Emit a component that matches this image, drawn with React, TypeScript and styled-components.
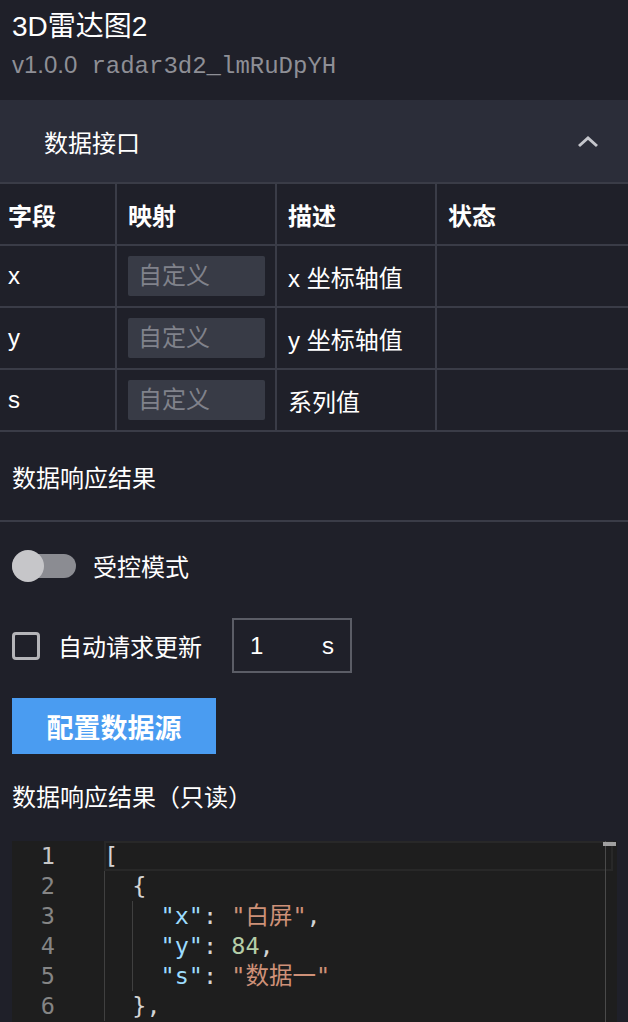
import styled, { createGlobalStyle } from "styled-components";

const GlobalStyle = createGlobalStyle`
  body {
    margin: 0;
    background: #1f2029;
    color: #fff;
    font-family: "Liberation Sans", "Noto Sans CJK SC", sans-serif;
  }
`;

const Page = styled.div`
  width: 628px;
`;

const Header = styled.div`
  height: 100px;
  box-sizing: border-box;
  padding: 11px 12px 0;
`;

const Title = styled.h1`
  margin: 0;
  font-size: 28px;
  line-height: 32px;
  font-weight: 400;
`;

const Version = styled.div`
  margin-top: 8px;
  font-size: 24px;
  line-height: 28px;
  color: #8e8f96;
`;

const Mono = styled.span`
  margin-left: 14px;
  font-family: "Liberation Mono", monospace;
`;

const Collapse = styled.div`
  height: 82px;
  display: flex;
  align-items: center;
  justify-content: space-between;
  padding: 0 28px 0 44px;
  background: #2b2d39;
  font-size: 24px;
`;

const Grid = styled.div`
  border-top: 2px solid #3a3c47;
`;

const Row = styled.div`
  display: grid;
  grid-template-columns: 117px 160px 160px 1fr;
`;

const Cell = styled.div<{ $head?: boolean }>`
  height: 62px;
  box-sizing: border-box;
  display: flex;
  align-items: center;
  padding: 0 10px 0 11px;
  border-right: 2px solid #3a3c47;
  border-bottom: 2px solid #3a3c47;
  font-size: 24px;
  font-weight: ${(p) => (p.$head ? 700 : 400)};
  &:first-child {
    padding-left: 8px;
  }
  &:last-child {
    border-right: none;
  }
`;

const MapInput = styled.input`
  width: 100%;
  height: 40px;
  box-sizing: border-box;
  border: none;
  border-radius: 2px;
  background: #383b46;
  padding: 0 10px;
  font-size: 24px;
  font-family: inherit;
  color: #fff;
  &::placeholder {
    color: #80828b;
  }
`;

const ResultRow = styled.div`
  height: 88px;
  display: flex;
  align-items: center;
  padding: 0 12px;
  font-size: 24px;
  border-bottom: 2px solid #3a3c47;
`;

const Controls = styled.div`
  padding: 27px 12px 0;
  display: flex;
  flex-direction: column;
  align-items: flex-start;
`;

const ToggleRow = styled.div`
  display: flex;
  align-items: center;
  gap: 17px;
  height: 33px;
  font-size: 24px;
`;

const Track = styled.div`
  position: relative;
  width: 64px;
  height: 24px;
  border-radius: 12px;
  background: #8b8c92;
`;

const Thumb = styled.div`
  position: absolute;
  left: 0;
  top: -4px;
  width: 32px;
  height: 32px;
  border-radius: 50%;
  background: #c6c6c9;
`;

const CheckRow = styled.div`
  margin-top: 36px;
  display: flex;
  align-items: center;
  font-size: 24px;
`;

const Checkbox = styled.span`
  width: 28px;
  height: 28px;
  box-sizing: border-box;
  border: 3px solid #b4b4b8;
  border-radius: 4px;
  margin-right: 18px;
`;

const NumberBox = styled.div`
  margin-left: 30px;
  width: 120px;
  height: 55px;
  box-sizing: border-box;
  border: 2px solid #5b5d66;
  display: flex;
  align-items: center;
  justify-content: space-between;
  padding: 0 16px;
`;

const Button = styled.button`
  margin-top: 25px;
  width: 204px;
  height: 56px;
  border: none;
  background: #4a9cf1;
  color: #fff;
  font-family: inherit;
  font-size: 27px;
  font-weight: 700;
  cursor: pointer;
`;

const Label = styled.div`
  margin-top: 29px;
  font-size: 24px;
  line-height: 30px;
`;

const Editor = styled.div`
  position: relative;
  margin: 28px 0 0 12px;
  width: 605px;
  padding-bottom: 40px;
  background: #1e1e1e;
  font-family: "DejaVu Sans Mono", "Noto Sans CJK SC", monospace;
  font-size: 23.5px;
  line-height: 30px;
`;

const Line = styled.div`
  display: flex;
  height: 30px;
`;

const LineNo = styled.span<{ $active?: boolean }>`
  width: 92px;
  box-sizing: border-box;
  padding-right: 49px;
  text-align: right;
  color: ${(p) => (p.$active ? "#c6c6c6" : "#858585")};
`;

const Code = styled.span<{ $active?: boolean }>`
  flex: 1;
  margin-right: 4px;
  white-space: pre;
  box-shadow: ${(p) => (p.$active ? "inset 0 0 0 2px #282828" : "none")};
`;

const Guide = styled.span`
  display: inline-block;
  width: 2ch;
  height: 30px;
  vertical-align: top;
  border-left: 1px solid #404040;
  box-sizing: border-box;
`;

const Tok = styled.span<{ $c: string }>`
  color: ${(p) => p.$c};
`;

const ScrollLine = styled.div`
  position: absolute;
  top: 0;
  bottom: 0;
  right: 11px;
  width: 1px;
  background: #4a4a4a;
`;

const ScrollMark = styled.div`
  position: absolute;
  top: 1px;
  right: 1px;
  width: 13px;
  height: 4px;
  background: #a0a0a0;
`;

const P = "#d4d4d4";
const K = "#9cdcfe";
const S = "#ce9178";
const N = "#b5cea8";

type Token = [string, string];
const lines: { indent: number; tokens: Token[] }[] = [
  { indent: 0, tokens: [["[", P]] },
  { indent: 1, tokens: [["{", P]] },
  { indent: 2, tokens: [['"x"', K], [": ", P], ['"白屏"', S], [",", P]] },
  { indent: 2, tokens: [['"y"', K], [": ", P], ["84", N], [",", P]] },
  { indent: 2, tokens: [['"s"', K], [": ", P], ['"数据一"', S]] },
  { indent: 1, tokens: [["},", P]] },
];

const fields = [
  { name: "x", desc: "x 坐标轴值" },
  { name: "y", desc: "y 坐标轴值" },
  { name: "s", desc: "系列值" },
];

export default function App() {
  return (
    <Page>
      <GlobalStyle />
      <Header>
        <Title>3D雷达图2</Title>
        <Version>
          v1.0.0<Mono>radar3d2_lmRuDpYH</Mono>
        </Version>
      </Header>
      <Collapse>
        <span>数据接口</span>
        <svg width="24" height="24" viewBox="0 0 24 24">
          <polyline points="3,17 12,9 21,17" fill="none" stroke="#c5c6cc" strokeWidth="3" />
        </svg>
      </Collapse>
      <Grid>
        <Row>
          <Cell $head>字段</Cell>
          <Cell $head>映射</Cell>
          <Cell $head>描述</Cell>
          <Cell $head>状态</Cell>
        </Row>
        {fields.map((f) => (
          <Row key={f.name}>
            <Cell>{f.name}</Cell>
            <Cell>
              <MapInput placeholder="自定义" />
            </Cell>
            <Cell>{f.desc}</Cell>
            <Cell />
          </Row>
        ))}
      </Grid>
      <ResultRow>数据响应结果</ResultRow>
      <Controls>
        <ToggleRow>
          <Track>
            <Thumb />
          </Track>
          受控模式
        </ToggleRow>
        <CheckRow>
          <Checkbox />
          自动请求更新
          <NumberBox>
            <span>1</span>
            <span>s</span>
          </NumberBox>
        </CheckRow>
        <Button>配置数据源</Button>
        <Label>数据响应结果（只读）</Label>
      </Controls>
      <Editor>
        {lines.map((l, i) => (
          <Line key={i}>
            <LineNo $active={i === 0}>{i + 1}</LineNo>
            <Code $active={i === 0}>
              {Array.from({ length: l.indent }).map((_, j) => (
                <Guide key={j} />
              ))}
              {l.tokens.map(([t, c], j) => (
                <Tok key={j} $c={c}>
                  {t}
                </Tok>
              ))}
            </Code>
          </Line>
        ))}
        <ScrollLine />
        <ScrollMark />
      </Editor>
    </Page>
  );
}
